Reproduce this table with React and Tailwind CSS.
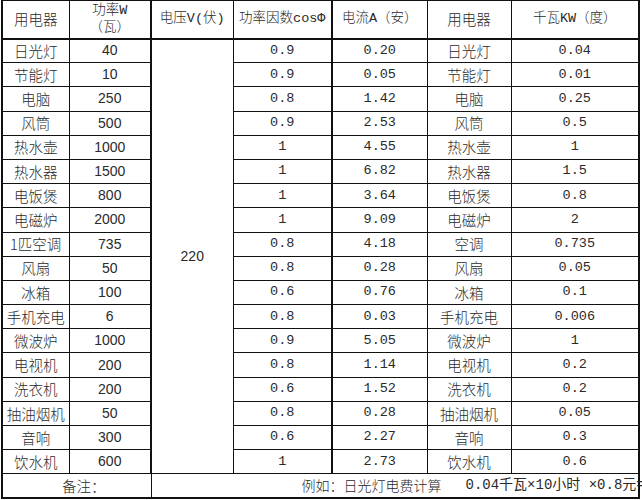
const rows = [
  ["日光灯", "40", "0.9", "0.20", "日光灯", "0.04"],
  ["节能灯", "10", "0.9", "0.05", "节能灯", "0.01"],
  ["电脑", "250", "0.8", "1.42", "电脑", "0.25"],
  ["风筒", "500", "0.9", "2.53", "风筒", "0.5"],
  ["热水壶", "1000", "1", "4.55", "热水壶", "1"],
  ["热水器", "1500", "1", "6.82", "热水器", "1.5"],
  ["电饭煲", "800", "1", "3.64", "电饭煲", "0.8"],
  ["电磁炉", "2000", "1", "9.09", "电磁炉", "2"],
  ["1匹空调", "735", "0.8", "4.18", "空调", "0.735"],
  ["风扇", "50", "0.8", "0.28", "风扇", "0.05"],
  ["冰箱", "100", "0.6", "0.76", "冰箱", "0.1"],
  ["手机充电", "6", "0.8", "0.03", "手机充电", "0.006"],
  ["微波炉", "1000", "0.9", "5.05", "微波炉", "1"],
  ["电视机", "200", "0.8", "1.14", "电视机", "0.2"],
  ["洗衣机", "200", "0.6", "1.52", "洗衣机", "0.2"],
  ["抽油烟机", "50", "0.8", "0.28", "抽油烟机", "0.05"],
  ["音响", "300", "0.6", "2.27", "音响", "0.3"],
  ["饮水机", "600", "1", "2.73", "饮水机", "0.6"],
];

const cell = "border border-[#111] text-center align-middle p-0 whitespace-nowrap";
const cjk = "text-[14.5px] font-light font-['Noto_Sans_CJK_SC',sans-serif]";
const mono = "text-[13.5px] font-['Liberation_Mono','Noto_Sans_CJK_SC',monospace]";
const head = "text-[13.5px] font-light font-['Liberation_Mono','Noto_Sans_CJK_SC',monospace]";
const sans = "text-[14px] font-['Liberation_Sans','Noto_Sans_CJK_SC',sans-serif]";

export default function App() {
  return (
    <div className="w-[642px] h-[500px] bg-white overflow-hidden text-[#2a2a2a]">
      <table className="ml-[1px] w-[637px] table-fixed border-collapse border-2 border-[#111] border-t border-t-[#333]">
        <colgroup>
          <col className="w-[67px]" />
          <col className="w-[82px]" />
          <col className="w-[82px]" />
          <col className="w-[99px]" />
          <col className="w-[95px]" />
          <col className="w-[84px]" />
          <col className="w-[128px]" />
        </colgroup>
        <thead>
          <tr className="h-[38px]">
            <th className={`${cell} ${cjk}`}>用电器</th>
            <th className={`${cell} ${head} leading-[17px]`}>
              <div>功率W</div>
              <div>（瓦）</div>
            </th>
            <th className={`${cell} ${head} border-l-2`}>电压V(伏)</th>
            <th className={`${cell} ${head}`}>功率因数cosΦ</th>
            <th className={`${cell} ${head} border-l-2`}>电流A（安）</th>
            <th className={`${cell} ${cjk}`}>用电器</th>
            <th className={`${cell} ${head}`}>千瓦KW（度）</th>
          </tr>
        </thead>
        <tbody className="border-t-2 border-[#111]">
          {rows.map((r, i) => (
            <tr key={i} className="h-[24.2px]">
              <td className={`${cell} ${cjk}`}>{r[0]}</td>
              <td className={`${cell} ${sans}`}>{r[1]}</td>
              {i === 0 && (
                <td rowSpan={18} className={`${cell} ${sans} border-l-2`}>
                  220
                </td>
              )}
              <td className={`${cell} ${mono}`}>{r[2]}</td>
              <td className={`${cell} ${mono} border-l-2`}>{r[3]}</td>
              <td className={`${cell} ${cjk}`}>{r[4]}</td>
              <td className={`${cell} ${mono}`}>{r[5]}</td>
            </tr>
          ))}
          <tr className="h-[24px]">
            <td colSpan={2} className={`${cell} ${cjk} pl-[14px]`}>备注：</td>
            <td colSpan={5} className={`${cell} ${mono} text-[14px] text-left border-r-0 overflow-visible`}>
              <div className="flex pl-[150px] w-[520px]">
                <span className="font-light font-['Noto_Sans_CJK_SC',sans-serif]">例如：日光灯电费计算</span>
                <span className="ml-[24px]">0.04千瓦×10小时 ×0.8元=</span>
              </div>
            </td>
          </tr>
        </tbody>
      </table>
    </div>
  );
}
